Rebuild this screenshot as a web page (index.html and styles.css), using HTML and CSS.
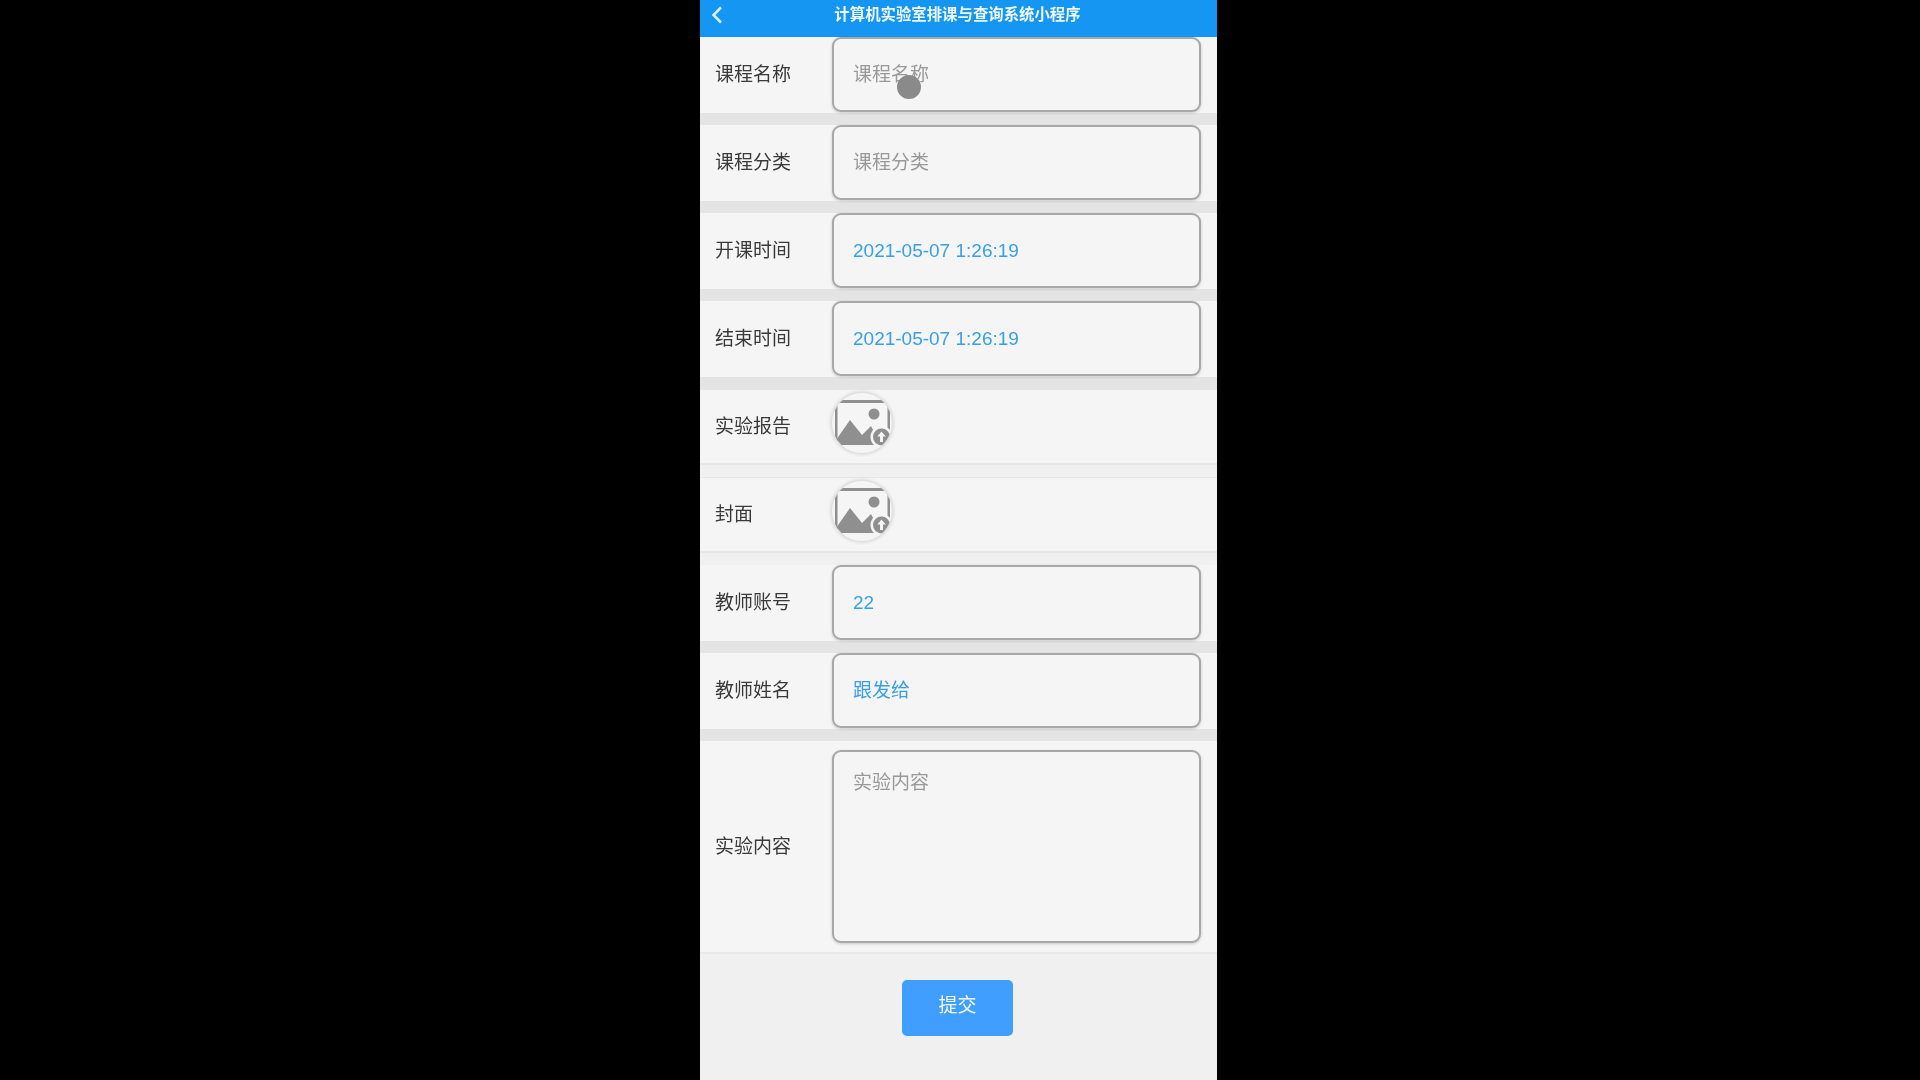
FILE: index.html
```html
<!DOCTYPE html>
<html lang="zh-CN">
<head>
<meta charset="utf-8">
<title>计算机实验室排课与查询系统小程序</title>
<link rel="stylesheet" href="styles.css">
</head>
<body>
<main class="phone">
  <header class="topbar">
    <svg class="back" width="14" height="20" viewBox="0 0 14 20"><path d="M11 2.500 3.500 10l7.500 7.500" fill="none" stroke="#d8f0ff" stroke-width="2.500"/></svg>
    <h1 class="title">计算机实验室排课与查询系统小程序</h1>
  </header>
  <section class="row field"><span class="label">课程名称</span><div class="box hint">课程名称</div><span class="touch"></span></section>
  <section class="row field"><span class="label">课程分类</span><div class="box hint">课程分类</div></section>
  <section class="row field"><span class="label">开课时间</span><div class="box value latin">2021-05-07 1:26:19</div></section>
  <section class="row field"><span class="label">结束时间</span><div class="box value latin">2021-05-07 1:26:19</div></section>
  <section class="row plain"><span class="label">实验报告</span>
    <div class="upload"><svg width="60" height="60" viewBox="0 0 60 60"><path d="M3 7h55v33h-2.500V10H5.500v42H3z" fill="#8f8f8f"/><path d="M4 52v-5l14-20 12 15 9-9 10 19z" fill="#8f8f8f"/><circle cx="42" cy="21" r="5.500" fill="#8f8f8f"/><circle cx="49.500" cy="44" r="11" fill="#f5f5f5"/><circle cx="49.500" cy="44" r="8.500" fill="#8f8f8f"/><path d="M49.500 38.500 45.300 43.500H48V49h3v-5.500h2.700z" fill="#f5f5f5"/></svg></div>
  </section>
  <section class="row plain"><span class="label">封面</span>
    <div class="upload"><svg width="60" height="60" viewBox="0 0 60 60"><path d="M3 7h55v33h-2.500V10H5.500v42H3z" fill="#8f8f8f"/><path d="M4 52v-5l14-20 12 15 9-9 10 19z" fill="#8f8f8f"/><circle cx="42" cy="21" r="5.500" fill="#8f8f8f"/><circle cx="49.500" cy="44" r="11" fill="#f5f5f5"/><circle cx="49.500" cy="44" r="8.500" fill="#8f8f8f"/><path d="M49.500 38.500 45.300 43.500H48V49h3v-5.500h2.700z" fill="#f5f5f5"/></svg></div>
  </section>
  <section class="row field"><span class="label">教师账号</span><div class="box value latin">22</div></section>
  <section class="row field"><span class="label">教师姓名</span><div class="box value">跟发给</div></section>
  <section class="row area"><span class="label">实验内容</span><div class="box hint multi">实验内容</div></section>
  <div class="actions"><button class="submit" type="button">提交</button></div>
</main>
</body>
</html>
```
FILE: styles.css
```css
* { box-sizing: border-box; }
html, body { margin: 0; height: 100%; }
body {
  background: #000;
  font-family: "Liberation Sans", "Noto Sans CJK SC", sans-serif;
  overflow: hidden;
}
.phone {
  width: 517px;
  height: 1080px;
  margin-left: 700px;
  background: #f0f0f0;
  filter: blur(0.55px);
  overflow: hidden;
}
.topbar {
  position: relative;
  height: 37px;
  padding-bottom: 11px;
  background: #1596f2;
  display: flex;
  align-items: center;
  justify-content: center;
}
.back { position: absolute; left: 10px; top: 5px; }
.title {
  margin: 0 2px 0 0;
  font-size: 15.400px;
  font-weight: 700;
  line-height: 24px;
  color: #eef8ff;
  font-family: "Noto Sans CJK SC", sans-serif;
}
.row {
  position: relative;
  display: flex;
  align-items: center;
  height: 88px;
  padding: 0 16px 1px 15px;
  background: #f5f5f5;
  background-clip: padding-box;
}
.row.field { border-bottom: 12px solid #e4e4e4; }
.row.plain {
  border-bottom: 12px solid #f0f0f0;
  box-shadow: inset 0 1px 0 #e6e6e6;
}
.row.plain::after {
  content: "";
  position: absolute;
  left: 0;
  right: 0;
  bottom: 0;
  height: 2px;
  background: #e6e6e6;
}
.row.area {
  height: 213px;
  padding: 10px 16px 10px 15px;
  border-bottom: 2px solid #e8e8e8;
}
.label {
  width: 117px;
  flex: none;
  padding-bottom: 3px;
  font-size: 19px;
  line-height: 28px;
  color: #3a3a3a;
  font-family: "Noto Sans CJK SC", sans-serif;
}
.box {
  flex: 1;
  height: 75px;
  padding: 0 19px 4px;
  display: flex;
  align-items: center;
  border: 2px solid #a8a8a8;
  border-radius: 9px;
  box-shadow: 0 1px 3px rgba(0, 0, 0, .18);
  font-size: 19px;
  font-family: "Noto Sans CJK SC", sans-serif;
  background: #f5f5f5;
}
.hint { color: #999; }
.value { color: #3a9fe8; }
.latin { font-family: "Liberation Sans", sans-serif; padding-bottom: 0; }
.multi { height: 193px; align-items: flex-start; padding-top: 15px; }
.upload {
  width: 60px;
  height: 60px;
  border-radius: 50%;
  overflow: hidden;
  background: #f5f5f5;
  box-shadow: 0 0 3px 2px #dcdcdc;
  margin-bottom: 8px;
}
.upload svg { display: block; }
.touch {
  position: absolute;
  left: 197px;
  top: 38px;
  width: 24px;
  height: 24px;
  border-radius: 50%;
  background: #8a8a8a;
}
.actions { display: flex; justify-content: center; padding: 26px 2px 0 0; }
.submit {
  width: 111px;
  height: 56px;
  border: 0;
  border-radius: 5px;
  padding: 0 0 10px;
  background: #409eff;
  color: #f4faff;
  font-size: 19px;
  font-family: "Noto Sans CJK SC", sans-serif;
}
```
